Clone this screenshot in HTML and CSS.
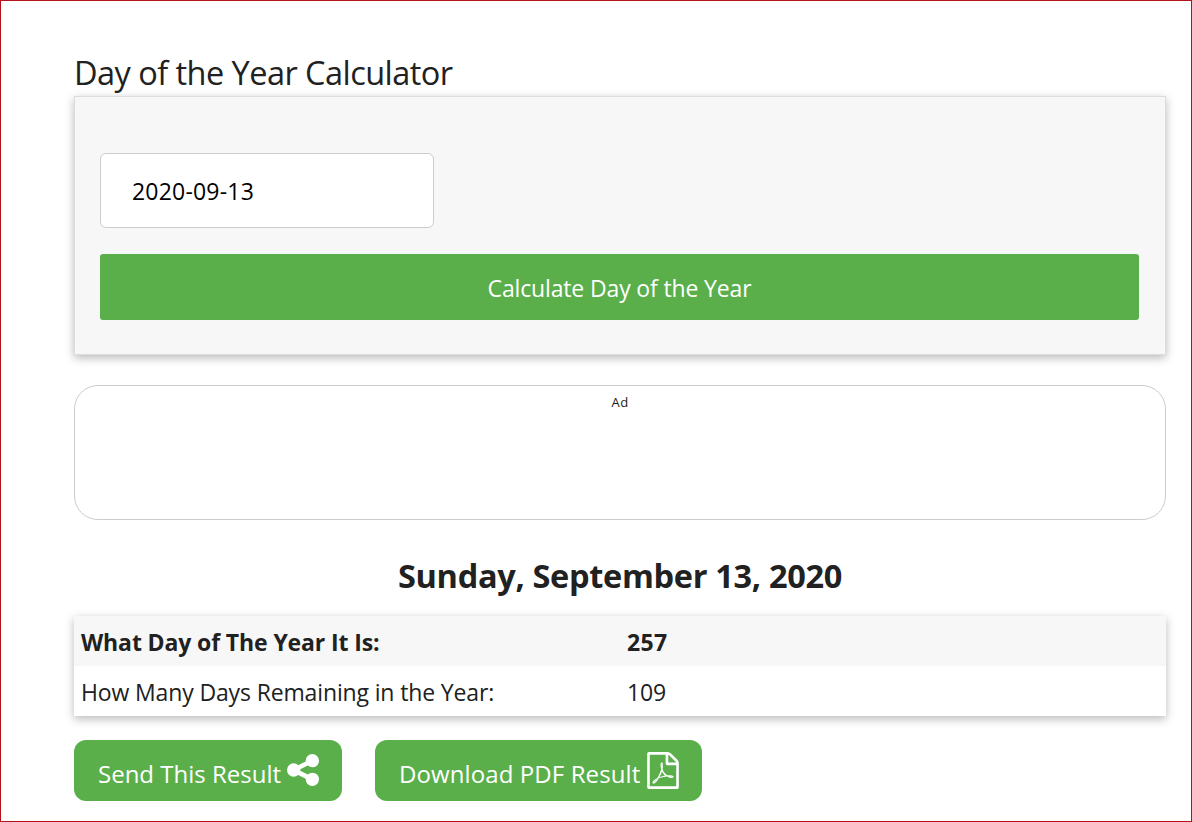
FILE: index.html
```
<!DOCTYPE html>
<html lang="en">
<head>
<meta charset="utf-8">
<title>Day of the Year Calculator</title>
<link rel="stylesheet" href="styles.css">
</head>
<body>
<main class="page">
  <h1 class="title"><span class="title-text">Day of the Year Calculator</span></h1>
  <form class="calculator">
    <input class="date-input" type="text" value="2020-09-13" aria-label="Date">
    <button class="calculate" type="button"><span class="calculate-text">Calculate Day of the Year</span></button>
  </form>
  <aside class="ad"><span class="ad-text">Ad</span></aside>
  <h2 class="date"><span class="date-text">Sunday, September 13, 2020</span></h2>
  <div class="results">
    <div class="row row-main"><div class="cell"><span class="label-main">What Day of The Year It Is:</span></div><div class="cell"><span class="value-main">257</span></div></div>
    <div class="row"><div class="cell"><span class="label-sub">How Many Days Remaining in the Year:</span></div><div class="cell"><span class="value-sub">109</span></div></div>
  </div>
  <div class="actions">
    <button class="action send" type="button"><span class="send-text">Send This Result</span>
      <svg class="share-icon" viewBox="0 128 1536 1536"><path fill="currentColor" d="M1216 1024q133 0 226.500 93.500t93.500 226.500-93.500 226.500-226.500 93.500-226.500-93.500-93.500-226.500q0-12 2-34l-360-180q-92 86-218 86-133 0-226.500-93.500t-93.500-226.500 93.500-226.500 226.500-93.500q126 0 218 86l360-180q-2-22-2-34 0-133 93.500-226.500t226.500-93.500 226.500 93.500 93.500 226.500-93.500 226.500-226.500 93.500q-126 0-218-86l-360 180q2 22 2 34t-2 34l360 180q92-86 218-86z"/></svg>
    </button>
    <button class="action download" type="button"><span class="download-text">Download PDF Result</span>
      <svg class="pdf-icon" viewBox="0 0 1536 1792"><path fill="currentColor" d="M1468 380q28 28 48 76t20 88v1152q0 40-28 68t-68 28h-1344q-40 0-68-28t-28-68v-1600q0-40 28-68t68-28h896q40 0 88 20t76 48zm-444-244v376h376q-10-29-22-41l-313-313q-12-12-41-22zm384 1528v-1024h-416q-40 0-68-28t-28-68v-416h-768v1536h1280zm-514-593q33 26 84 56 59-7 117-7 147 0 177 49 16 22 2 52 0 1-1 2l-2 2v1q-6 38-71 38-48 0-115-20t-130-53q-221 24-392 83-153 262-242 262-15 0-28-7l-24-12q-1-1-6-5-10-10-6-36 9-40 56-91.500t132-96.500q14-9 23 6 2 2 2 4 52-85 107-197 68-136 104-262-24-82-30.500-159.500t6.500-127.500q11-40 42-40h22q23 0 35 15 18 21 9 68-2 6-4 8 1 3 1 8v30q-2 123-14 192 55 164 146 238zm-576 411q52-24 137-158-51 40-87.500 84t-49.500 74zm398-920q-15 42-2 132 1-7 7-44 0-3 7-43 1-4 4-8-1-1-1-2-1-2-1-3-1-22-13-36 0 1-1 2v2zm-124 661q135-54 284-81-2-1-13-9.500t-16-13.500q-76-67-127-176-27 86-83 197-30 56-45 83zm646-16q-24-24-140-24 76 28 124 28 14 0 18-1 0-1-2-3z"/></svg>
    </button>
  </div>
</main>
</body>
</html>
```
FILE: styles.css
```
* { box-sizing: border-box; }
body {
  margin: 0;
  background: #fff;
  color: #212121;
  font-family: "Open Sans", "Noto Sans", sans-serif;
  font-size: 23px;
}
button, input { font: inherit; }
.page {
  height: 822px;
  padding: 49px 25px 0 73px;
  border: 1px solid #b3141c;
  overflow: hidden;
}
.title {
  height: 46px;
  margin: 0;
  font-size: 32.5px;
  font-weight: 400;
  letter-spacing: -.54px;
  line-height: 46px;
  white-space: nowrap;
}
.calculator {
  height: 259px;
  padding: 56px 26px 0 25px;
  border: 1px solid #ddd;
  background: #f7f7f7;
  box-shadow: 0 3px 9px rgba(0, 0, 0, .28);
}
.date-input {
  display: block;
  width: 334px;
  height: 75px;
  padding: 0 31px;
  border: 1px solid #ccc;
  border-radius: 6px;
  background: #fff;
  color: #000;
  letter-spacing: .2px;
}
.calculate {
  display: block;
  width: 100%;
  height: 66px;
  margin-top: 26px;
  padding: 1px 0 0;
  border: 0;
  border-radius: 3px;
  background: #5aaf4b;
  color: #fff;
  letter-spacing: -.15px;
}
.ad {
  height: 135px;
  margin-top: 30px;
  padding-top: 6px;
  border: 1px solid #ccc;
  border-radius: 24px;
  font-size: 13px;
  letter-spacing: .5px;
  line-height: 20px;
  text-align: center;
}
.date {
  height: 96px;
  margin: 0;
  padding-top: 33px;
  font-size: 32.5px;
  font-weight: 700;
  letter-spacing: -.31px;
  line-height: 46px;
  text-align: center;
  white-space: nowrap;
}
.results { box-shadow: 0 3px 9px rgba(0, 0, 0, .28); }
.row {
  display: grid;
  grid-template-columns: 1fr 1fr;
  height: 50px;
  padding-top: 2px;
  line-height: 48px;
}
.row-main { background: #f7f7f7; font-weight: 700; }
.cell { padding-left: 7px; white-space: nowrap; }
.label-main { letter-spacing: -.12px; }
.label-sub { letter-spacing: -.14px; }
.value-main { letter-spacing: .4px; }
.value-sub { letter-spacing: -.2px; }
.actions { display: flex; gap: 33px; margin-top: 24px; }
.action {
  display: flex;
  align-items: center;
  justify-content: space-between;
  height: 61px;
  padding: 0 23px 0 24px;
  border: 0;
  border-radius: 12px;
  background: #5aaf4b;
  color: #fff;
  font-size: 24px;
  white-space: nowrap;
}
.send { width: 268px; }
.download { width: 327px; letter-spacing: .1px; }
.send-text, .download-text { padding-top: 6px; }
.share-icon { flex: none; width: 32px; height: 32px; margin-bottom: 1px; }
.pdf-icon { flex: none; width: 32px; height: 37px; margin-bottom: 1px; }
```
